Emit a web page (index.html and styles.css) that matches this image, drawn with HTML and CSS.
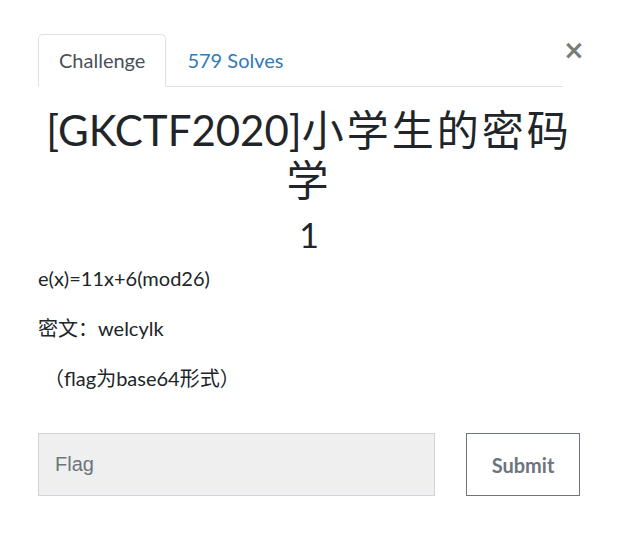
FILE: index.html
```html
<!DOCTYPE html>
<html>
<head>
<meta charset="utf-8">
<link rel="stylesheet" href="styles.css">
</head>
<body>
<div class="modal">
  <div class="header">
    <ul class="tabs">
      <li class="tab active">Challenge</li>
      <li class="tab link">579 Solves</li>
    </ul>
    <div class="close">&times;</div>
  </div>
  <h2 class="title">[GKCTF2020]<span class="cjk">小学生的密码学</span></h2>
  <h3 class="value">1</h3>
  <div class="desc">
    <p>e(x)=11x+6(mod26)</p>
    <p>密文：welcylk</p>
    <p class="note">（flag为base64形式）</p>
  </div>
  <form class="submit-row">
    <input class="flag" type="text" placeholder="Flag">
    <button class="btn" type="button">Submit</button>
  </form>
</div>
</body>
</html>
```
FILE: styles.css
```css
html, body {
  margin: 0;
  padding: 0;
  background: #fff;
}
body {
  font-family: Lato, "Noto Sans CJK SC", sans-serif;
  color: #212529;
}
.modal {
  width: 620px;
  box-sizing: border-box;
  padding: 34px 40px 0 38px;
}
.header {
  display: flex;
  align-items: flex-start;
}
.tabs {
  flex: 1;
  display: flex;
  list-style: none;
  margin: 0;
  padding: 0;
  border-bottom: 1px solid #dee2e6;
}
.tab {
  font-size: 20px;
  line-height: 28px;
  padding: 11px 20px 12px 20px;
  margin-bottom: -1px;
  border: 1px solid transparent;
  border-radius: 5px 5px 0 0;
}
.tab.active {
  color: #495057;
  border-color: #dee2e6 #dee2e6 #fff;
  background: #fff;
}
.tab.link {
  color: #337ab7;
}
.close {
  width: 17px;
  font-family: "DejaVu Sans", sans-serif;
  font-size: 26px;
  font-weight: bold;
  line-height: 30px;
  margin-top: 1px;
  color: #7a7a7a;
  text-align: right;
}
.title {
  font-family: Lato, "Noto Sans CJK SC", sans-serif;
  font-weight: 400;
  font-size: 42px;
  line-height: 50px;
  text-align: center;
  margin: 18px 0 0 0;
}
.title .cjk {
  letter-spacing: 3px;
}
.value {
  font-weight: 400;
  font-size: 34px;
  line-height: 44px;
  text-align: center;
  margin: 8px 0 0 0;
}
.desc {
  margin-top: 8px;
}
.desc p {
  font-size: 20px;
  line-height: 26px;
  margin: 0 0 24px 0;
}
.desc p.note {
  text-indent: 6px;
}
.submit-row {
  display: flex;
  gap: 31px;
  margin-top: 42px;
}
.flag {
  width: 397px;
  height: 63px;
  box-sizing: border-box;
  background: #efefef;
  border: 1px solid #ced4da;
  padding: 0 16px;
  font-family: "Liberation Sans", Arial, sans-serif;
  font-size: 20px;
  color: #495057;
  margin: 0;
  outline: none;
}
.flag::placeholder {
  color: #6c757d;
}
.btn {
  width: 114px;
  height: 63px;
  box-sizing: border-box;
  background: #fff;
  border: 1px solid #6c757d;
  font-family: Lato, sans-serif;
  font-weight: bold;
  font-size: 20px;
  color: #6c757d;
  margin: 0;
  padding: 0;
}
```
